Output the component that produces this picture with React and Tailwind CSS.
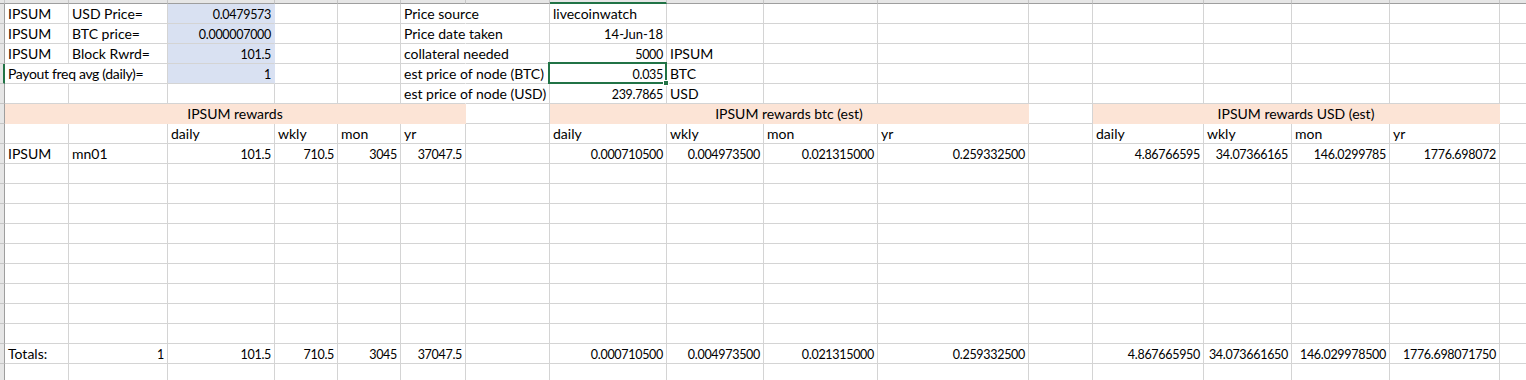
import clsx from "clsx";

const BLUE = "bg-[#d9e1f2] border-r-[#d9e1f2]";
const SALMON = "bg-[#fce4d6] border-r-[#fce4d6] border-b-[#fce4d6]";
const E = {};

const rows = [
  [{ t: "IPSUM" }, { t: "USD Price=" }, { t: "0.0479573", a: "r", bg: BLUE }, E, E, { t: "Price source", nr: true }, E, { t: "livecoinwatch" }, E, E, E, E, E, E, E, E, E],
  [{ t: "IPSUM" }, { t: "BTC price=" }, { t: "0.000007000", a: "r", bg: BLUE }, E, E, { t: "Price date taken", nr: true }, E, { t: "14-Jun-18", a: "r", sz: "text-[13px]" }, E, E, E, E, E, E, E, E, E],
  [{ t: "IPSUM" }, { t: "Block Rwrd=" }, { t: "101.5", a: "r", bg: BLUE }, E, E, { t: "collateral needed", nr: true }, E, { t: "5000", a: "r" }, { t: "IPSUM" }, E, E, E, E, E, E, E, E],
  [{ t: "Payout freq avg (daily)=", nr: true, sz: "text-[14px] tracking-[-0.33px]" }, E, { t: "1", a: "r", bg: BLUE }, E, E, { t: "est price of node (BTC)", nr: true }, E, { t: "0.035", a: "r", sel: true }, { t: "BTC" }, E, E, E, E, E, E, E, E],
  [E, E, E, E, E, { t: "est price of node (USD)", nr: true }, E, { t: "239.7865", a: "r" }, { t: "USD" }, E, E, E, E, E, E, E, E],
  [{ t: "IPSUM rewards", a: "c", bg: SALMON, span: "col-span-6" }, E, { t: "IPSUM rewards btc (est)", a: "c", bg: SALMON, span: "col-span-4" }, E, { t: "IPSUM rewards USD (est)", a: "c", bg: SALMON, span: "col-span-4" }, E],
  [E, E, { t: "daily" }, { t: "wkly" }, { t: "mon" }, { t: "yr" }, E, { t: "daily" }, { t: "wkly" }, { t: "mon" }, { t: "yr" }, E, { t: "daily" }, { t: "wkly" }, { t: "mon" }, { t: "yr" }, E],
  [{ t: "IPSUM" }, { t: "mn01" }, { t: "101.5", a: "r" }, { t: "710.5", a: "r" }, { t: "3045", a: "r" }, { t: "37047.5", a: "r" }, E, { t: "0.000710500", a: "r" }, { t: "0.004973500", a: "r" }, { t: "0.021315000", a: "r" }, { t: "0.259332500", a: "r" }, E, { t: "4.86766595", a: "r" }, { t: "34.07366165", a: "r" }, { t: "146.0299785", a: "r" }, { t: "1776.698072", a: "r" }, E],
];

const empty = Array.from({ length: 17 }, () => E);
for (let i = 0; i < 9; i++) rows.push(empty);
rows.push([{ t: "Totals:" }, { t: "1", a: "r" }, { t: "101.5", a: "r" }, { t: "710.5", a: "r" }, { t: "3045", a: "r" }, { t: "37047.5", a: "r" }, E, { t: "0.000710500", a: "r" }, { t: "0.004973500", a: "r" }, { t: "0.021315000", a: "r" }, { t: "0.259332500", a: "r" }, E, { t: "4.867665950", a: "r" }, { t: "34.073661650", a: "r" }, { t: "146.029978500", a: "r" }, { t: "1776.698071750", a: "r" }, E]);
rows.push(empty);

function Cell({ c }) {
  const align = c.a === "r" ? "justify-end" : c.a === "c" ? "justify-center" : "justify-start";
  // numbers get tighter tracking so digits keep Excel's 7px advance
  const size = c.sz || (c.a === "r" ? "text-[12.5px] tracking-[-0.3px]" : "text-[14px]");
  return (
    <div
      className={clsx(
        "relative flex items-end whitespace-nowrap border-r border-b border-[#d4d4d4] px-[3px] pb-[2px] leading-none",
        align,
        size,
        c.span,
        c.bg,
        c.nr && "border-r-transparent"
      )}
    >
      {c.t}
      {c.sel && (
        <div className="absolute top-[-2px] left-[-2px] right-[-1px] bottom-[-1px] z-10 border-2 border-[#217346]">
          <div className="absolute right-[-4px] bottom-[-4px] h-[6px] w-[6px] border border-white bg-[#217346]" />
        </div>
      )}
    </div>
  );
}

export default function App() {
  return (
    <div className="h-[380px] w-[1526px] overflow-hidden bg-white font-[Lato,sans-serif] text-black">
      <div className="grid w-max grid-cols-[5px_64px_99px_107px_63px_63px_65px_84px_117px_97px_114px_151px_64px_111px_88px_98px_110px_64px] grid-rows-[4px_repeat(19,20px)]">
        {Array.from({ length: 18 }, (_, i) => (
          <div
            key={"h" + i}
            className={clsx(
              "border-r border-b border-r-[#c6c6c6] bg-[#e6e6e6]",
              i === 8 ? "border-b-2 border-b-[#217346]" : "border-b-[#9e9e9e]"
            )}
          />
        ))}
        {rows.map((r, ri) => [
          <div
            key={"g" + ri}
            className={clsx(
              "border-b border-b-[#c6c6c6] bg-[#e6e6e6]",
              ri === 3 ? "border-r-2 border-r-[#217346]" : "border-r border-r-[#9e9e9e]"
            )}
          />,
          ...r.map((c, ci) => <Cell key={ri + "-" + ci} c={c} />),
        ])}
      </div>
    </div>
  );
}
